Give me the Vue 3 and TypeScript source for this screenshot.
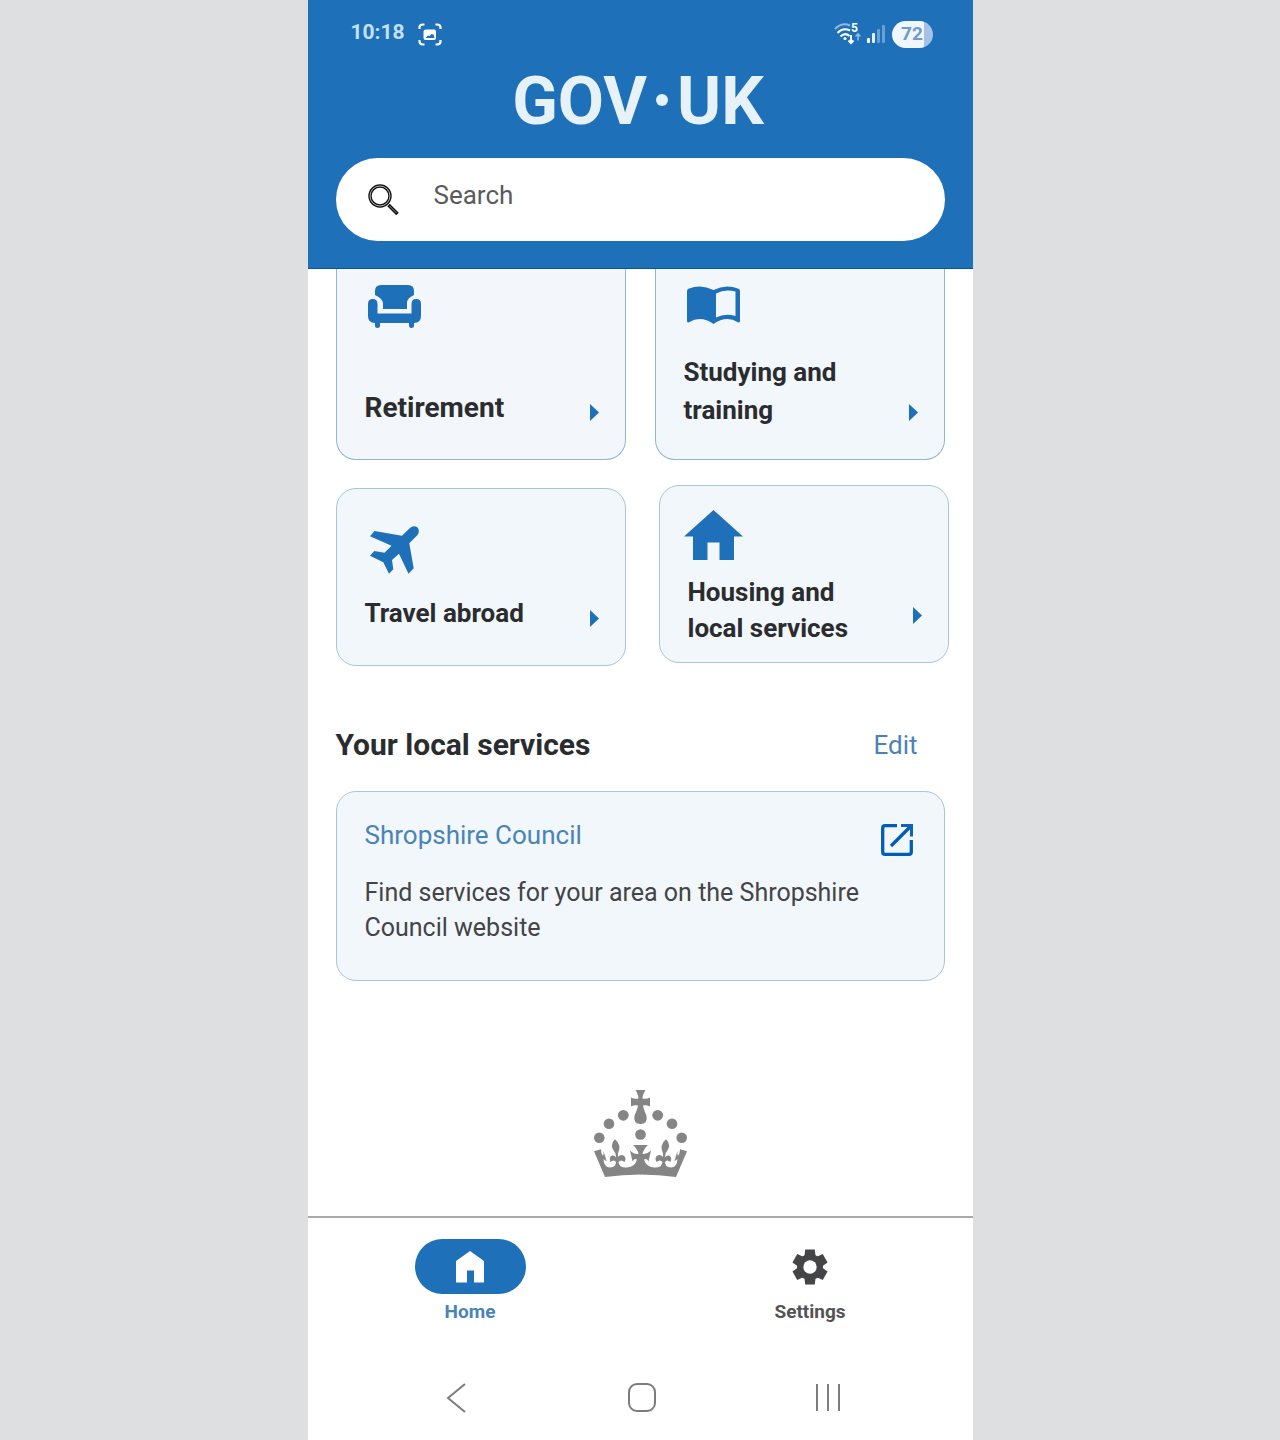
<script setup lang="ts">
import { ref } from 'vue'

interface Topic {
  title: string
  icon: string
  spacing: string
}

const upperTopics: Topic[] = [
  { title: 'Retirement', icon: 'sofa', spacing: 'card-large' },
  { title: 'Studying and training', icon: 'book', spacing: 'card-medium' },
]

const lowerTopics: Topic[] = [
  { title: 'Travel abroad', icon: 'plane', spacing: 'card-roomy' },
  { title: 'Housing and local services', icon: 'house', spacing: 'card-tight' },
]

const rows = [
  { name: 'row-upper', topics: upperTopics },
  { name: 'row-lower', topics: lowerTopics },
]

const query = ref('')
</script>

<template>
  <div class="page">
    <div class="phone">
      <header class="header">
        <div class="status">
          <div class="status-group">
            <span class="time">10:18</span>
            <svg class="capture" viewBox="0 0 24 24" width="24" height="24" aria-hidden="true">
              <path d="M1.500 6V4.500Q1.500 1.500 5 1.500H6.500M17.500 1.500H19Q22.500 1.500 22.500 4.500V6M22.500 17V18.500Q22.500 21.500 19 21.500H17.500M6.500 21.500H5Q1.500 21.500 1.500 18.500V17" fill="none" stroke="#fff" stroke-width="2.200" />
              <path fill-rule="evenodd" d="M8 6.500H16Q18 6.500 18 8.500V15Q18 17 16 17H7.500Q5.500 17 5.500 15V8.500Q5.500 6.500 8 6.500ZM7.500 15H16.500L15.500 11.500L13.500 11L11.500 13L10 12.500Z" fill="#fff" />
            </svg>
          </div>
          <div class="status-group indicators">
            <svg class="wifi" viewBox="0 -5 27 32" width="27" height="32" aria-hidden="true">
              <g fill="none" stroke-width="2">
                <path d="M1 6Q8-1 16 2.500" stroke="#8fb9e3" />
                <path d="M3.500 10Q9 4 16 7.500M6.500 13.500Q11 9 15.500 13" stroke="#fff" />
                <path d="M17 12V19.500M14.500 17.500L17 20L19.500 17.500" stroke="#fff" />
                <path d="M24 17.500V11M21.500 13.500L24 11L26.500 13.500" stroke="#8fb9e3" stroke-width="1.600" />
              </g>
              <circle cx="11" cy="15.500" r="1.500" fill="#fff" />
              <text x="17" y="9" class="band">5</text>
            </svg>
            <svg viewBox="0 0 19 20" width="19" height="20" aria-hidden="true">
              <rect x="0" y="14" width="3" height="5" rx="1" fill="#fff" />
              <rect x="5" y="9" width="3" height="10" rx="1" fill="#e5f0fa" />
              <rect x="10" y="5" width="3" height="14" rx="1" fill="#6c9fd3" />
              <rect x="15" y="1" width="3" height="18" rx="1" fill="#6c9fd3" />
            </svg>
            <span class="battery">72</span>
          </div>
        </div>

        <div class="logo" role="img" aria-label="GOV.UK">
          <span>GOV</span><i class="dot"></i><span>UK</span>
        </div>

        <form class="search" role="search" @submit.prevent>
          <svg viewBox="0 0 32 32" width="32" height="32" aria-hidden="true">
            <circle cx="12" cy="12" r="10" fill="none" stroke="#111" stroke-width="3.400" />
            <circle cx="12" cy="12" r="10" fill="none" stroke="#ddd" stroke-width="0.800" />
            <path d="M20.500 21L29.500 30" stroke="#111" stroke-width="3.600" />
            <path d="M21.500 22L28.500 29" stroke="#aaa" stroke-width="0.800" />
          </svg>
          <input v-model="query" type="text" placeholder="Search" aria-label="Search" />
        </form>
      </header>

      <main class="content">
        <div v-for="row in rows" :key="row.name" class="row" :class="row.name">
          <a
            v-for="topic in row.topics"
            :key="topic.title"
            href="#"
            class="card"
            :class="topic.spacing"
          >
            <svg v-if="topic.icon === 'sofa'" class="icon" viewBox="-3 -5 60 50" aria-hidden="true">
              <path d="M13 0H40Q46 0 46 6V10Q39 13 39 18V24H15V18Q14 13 7 10V6Q7 0 13 0Z" />
              <path d="M4.700 14Q9.500 14 9.500 19V28.500H43.500V19Q43.500 14 48.300 14Q53 14 53 19V31Q53 38 46 38V41Q46 43 43.500 43Q41 43 41 41V38H12V41Q12 43 9.500 43Q7 43 7 41V38Q0 38 0 31V19Q0 14 4.700 14Z" />
            </svg>
            <svg v-else-if="topic.icon === 'book'" class="icon" viewBox="-3 -6 60 50" aria-hidden="true">
              <path fill-rule="evenodd" d="M2 36.200Q0 37 0 35V5Q0 3.500 1.500 2.800Q14-2.500 26.500 4Q39-2.500 51.500 2.800Q53 3.500 53 5V35Q53 37 51 36.200Q39 29 26.500 38Q14 29 2 36.200ZM29 7.500V31.500Q38 27 48.500 30V5.500Q38 2.500 29 7.500Z" />
            </svg>
            <svg v-else-if="topic.icon === 'plane'" class="icon" viewBox="-5 0 60 50" aria-hidden="true">
              <path d="M4.500 5L32 9.700L40 2Q43-1 47 1Q50.500 4.500 47.500 9L39.300 17.300L43.700 42.300L38.500 47.700L29 27.700L22 34L23.300 43.300L19 47.700L13.300 36.300L0 29.700L4.300 25L14.500 26.700L21.500 19.700L0 10.300Z" />
            </svg>
            <svg v-else class="icon" viewBox="4 0 60 50" aria-hidden="true">
              <path d="M29.500 0L59 26.500H50V50H35.500V32.500H23.500V50H9V26.500H0Z" />
            </svg>
            <span class="card-title">{{ topic.title }}</span>
            <svg class="arrow" viewBox="0 0 9 17" width="9" height="17" aria-hidden="true">
              <path d="M0 0L9 8.500L0 17Z" />
            </svg>
          </a>
        </div>

        <section class="local">
          <div class="local-head">
            <h2>Your local services</h2>
            <a href="#">Edit</a>
          </div>
          <article class="council">
            <div class="council-head">
              <a href="#">Shropshire Council</a>
              <svg viewBox="0 0 32 32" width="32" height="32" aria-hidden="true">
                <path d="M16 1.700H4Q1.700 1.700 1.700 4V28Q1.700 30.300 4 30.300H28Q30.300 30.300 30.300 28V16M10 22L29 3" fill="none" stroke="#005eb8" stroke-width="3.300" />
                <path d="M20 0H32V12.500H29V6L26 3H20Z" fill="#1462b3" />
              </svg>
            </div>
            <p>Find services for your area on the Shropshire Council website</p>
          </article>
        </section>

        <svg class="crown" viewBox="0 0 93 87" width="93" height="87" aria-hidden="true">
          <defs>
            <g id="crown-half">
              <circle cx="5.300" cy="47.700" r="5.300" />
              <circle cx="15" cy="33.700" r="5.300" />
              <circle cx="29.300" cy="25.300" r="5.400" />
              <path d="M47 0H41.500Q44.500 5 44.500 8.500Q41 9.500 37 7.500V16.500Q41 14.500 44 15.500Q43.500 19 40.500 25.500Q39 34 46.500 34H47Z" />
              <path d="M0 61.300L7 59.300Q7 64 9 66Q10 64 9.500 60.700L12.700 71.500Q10.500 69.500 9.500 69Q10 77.500 16 77.500Q22 77 22 72Q20 69 16.500 72Q14.500 67 18 65.500Q20.500 65 22 67.500L21.500 63.500Q14.500 55 21 49.300Q28 55 24 63.500V67Q26.500 64 29.500 65.500Q33 68 30.500 72Q27 69 24.500 72Q25 78 33 77.500Q41 77 43 69.500Q40.500 68 38.500 71.500L36 60.500Q40 64.500 44.500 64Q43.500 59 39 55H47V84.500Q28 84.500 11 87Z" />
            </g>
          </defs>
          <use href="#crown-half" />
          <use href="#crown-half" transform="translate(93 0) scale(-1 1)" />
          <circle cx="46.500" cy="44.500" r="5.300" />
        </svg>
      </main>

      <nav class="tabs" aria-label="Main">
        <a href="#" class="tab tab-active" aria-current="page">
          <span class="pill">
            <svg viewBox="0 0 28 32" width="28" height="32" aria-hidden="true">
              <path d="M14 0L28 10V31.500H18V19.500H11V31.500H0V10Z" fill="#fff" />
            </svg>
          </span>
          Home
        </a>
        <a href="#" class="tab">
          <span class="pill pill-plain">
            <svg viewBox="-18 -18 36 36" width="36" height="36" aria-hidden="true">
              <g fill="#454447">
                <circle r="13" />
                <g v-for="turn in 6" :key="turn" :transform="`rotate(${turn * 60})`">
                  <path d="M-5.500-11L-4.800-17.500H4.800L5.500-11Z" />
                </g>
              </g>
              <circle r="6.700" fill="#fff" />
            </svg>
          </span>
          Settings
        </a>
      </nav>

      <div class="system">
        <button type="button" aria-label="Back">
          <svg viewBox="0 0 30 30" width="30" height="30"><path d="M24 1L7 15L24 29" /></svg>
        </button>
        <button type="button" aria-label="Home screen">
          <svg viewBox="0 0 30 30" width="30" height="30"><rect x="2" y="1" width="26" height="27" rx="8" /></svg>
        </button>
        <button type="button" aria-label="Recent apps">
          <svg viewBox="0 0 30 30" width="30" height="30"><path d="M4 1V28M15 1V28M26 1V28" /></svg>
        </button>
      </div>
    </div>
  </div>
</template>

<style>
body {
  background: #dedfe1;
}
</style>

<style scoped>
.page {
  font-family: Roboto, 'Liberation Sans', sans-serif;
  color: #2b2c2f;
}

.phone {
  display: flex;
  flex-direction: column;
  box-sizing: border-box;
  max-width: 665px;
  min-height: 100vh;
  margin: 0 auto;
  background: #fff;
}

a {
  color: #4a83b5;
  text-decoration: none;
}

.header {
  padding: 18px 28px 27px;
  background: #1e70b9;
  border-bottom: 1px solid #0b5599;
}

.status {
  display: flex;
  justify-content: space-between;
  padding: 0 12px 0 15px;
}

.status-group {
  display: flex;
  align-items: flex-start;
  gap: 13px;
}

.time {
  color: #c3e1f3;
  font-size: 21px;
  font-weight: 700;
  line-height: 28px;
}

.capture {
  margin-top: 5px;
}

.indicators {
  align-items: center;
  gap: 6px;
  height: 32px;
}

.wifi {
  overflow: visible;
}

.band {
  fill: #fff;
  font-size: 12px;
  font-weight: 700;
}

.battery {
  box-sizing: border-box;
  width: 41px;
  height: 27px;
  border-radius: 14px;
  background: linear-gradient(90deg, #f0f6fd 78%, #a5c1e6 78%);
  color: #6f9bcb;
  font-size: 19px;
  font-weight: 700;
  line-height: 25px;
  text-align: center;
}

.logo {
  display: flex;
  align-items: center;
  justify-content: center;
  height: 76px;
  margin: 12px 4px 20px 0;
  color: #e6f1f8;
  font-size: 67px;
  font-weight: 700;
  line-height: 76px;
}

.logo span {
  padding-top: 2px;
}

.dot {
  width: 12px;
  height: 12px;
  margin: 0 9px;
  border-radius: 50%;
  background: #e6f1f8;
}

.search {
  display: flex;
  align-items: center;
  gap: 34px;
  height: 83px;
  padding: 0 32px;
  border-radius: 42px;
  background: #fff;
}

.search input {
  flex: 1;
  min-width: 0;
  padding: 0 0 10px;
  border: 0;
  outline: 0;
  background: none;
  color: #2b2c2f;
  font: 26px/32px Roboto, 'Liberation Sans', sans-serif;
}

.search input::placeholder {
  color: #5b5b5d;
  opacity: 1;
}

.content {
  flex: 1;
}

.row {
  display: grid;
  grid-template-columns: 1fr 1fr;
}

.row-upper {
  gap: 29px;
  padding: 0 28px;
}

.row-lower {
  gap: 33px;
  padding: 25px 24px 0 28px;
}

.card {
  display: grid;
  grid-template-columns: 1fr 9px;
  grid-template-rows: auto 1fr;
  box-sizing: border-box;
  min-height: 178px;
  padding: 0 26px 0 28px;
  border: 1px solid #a9c4dd;
  border-radius: 20px;
  background: #f2f7fb;
  color: #2b2c2f;
  font-size: 26px;
  font-weight: 700;
  line-height: 36px;
}

.row-upper .card {
  min-height: 191px;
  border-color: #8fb5d8;
  border-top: 0;
  border-radius: 0 0 20px 20px;
  line-height: 38px;
}

.card-medium {
  padding-top: 11px;
  padding-bottom: 30px;
}

.row-upper .card-large {
  padding-top: 11px;
  padding-bottom: 32px;
  background: #f3f6fb;
  font-size: 28px;
}

.card-roomy {
  align-self: end;
  margin-top: 3px;
  padding-top: 37px;
  padding-bottom: 34px;
}

.card-tight {
  align-self: start;
  padding-top: 24px;
  padding-bottom: 16px;
}

.icon {
  grid-column: 1;
  width: 60px;
  height: 50px;
  overflow: visible;
  fill: #1e70b9;
}

.card-title {
  grid-column: 1;
  align-self: end;
  max-width: 180px;
}

.arrow {
  grid-column: 2;
  grid-row: 1 / 3;
  align-self: end;
  fill: #1e70b9;
}

.card-medium .arrow {
  margin-bottom: 8px;
}

.card-large .arrow {
  margin-bottom: 6px;
}

.card-roomy .arrow {
  margin-bottom: 4px;
}

.card-tight .arrow {
  margin-bottom: 22px;
}

.local {
  padding: 59px 28px 0;
}

.local-head {
  display: flex;
  align-items: center;
  justify-content: space-between;
  padding-right: 27px;
  font-size: 26px;
  line-height: 40px;
}

h2 {
  margin: 0;
  font-size: 30px;
  font-weight: 700;
  line-height: 40px;
}

.council {
  margin-top: 26px;
  padding: 25px 31px 35px 28px;
  border: 1px solid #a9c4dd;
  border-radius: 20px;
  background: #f2f7fb;
  font-size: 26px;
}

.council-head {
  display: flex;
  align-items: flex-start;
  justify-content: space-between;
  line-height: 36px;
}

.council-head svg {
  margin-top: 7px;
}

.council p {
  margin: 19px 0 0;
  color: #434447;
  font-size: 25px;
  line-height: 35px;
}

.crown {
  display: block;
  margin: 109px auto 39px;
  fill: #858585;
}

.tabs {
  display: flex;
  justify-content: space-between;
  padding: 21px 107px 0;
  border-top: 2px solid #a9a9ab;
}

.tab {
  display: flex;
  flex-direction: column;
  align-items: center;
  gap: 6px;
  color: #535355;
  font-size: 19px;
  font-weight: 700;
  line-height: 24px;
}

.tab-active {
  color: #4a83b5;
}

.pill {
  display: flex;
  align-items: center;
  justify-content: center;
  width: 111px;
  height: 55px;
  border-radius: 28px;
  background: #1e70b9;
}

.pill-plain {
  background: none;
}

.system {
  display: flex;
  justify-content: center;
  gap: 146px;
  padding: 54px 0 22px 4px;
}

.system button {
  width: 40px;
  height: 40px;
  padding: 5px;
  border: 0;
  background: none;
}

.system svg {
  display: block;
  fill: none;
  stroke: #7c7c80;
  stroke-width: 2;
}
</style>
